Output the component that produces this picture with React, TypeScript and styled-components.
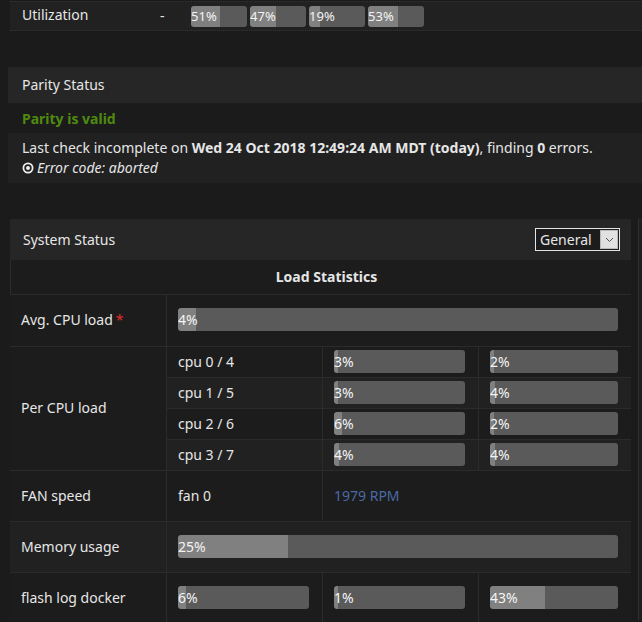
import { createGlobalStyle, styled } from 'styled-components';

const GlobalStyle = createGlobalStyle`
  html, body {
    margin: 0;
    padding: 0;
    background: #1b1b1b;
    color: #e6e6e6;
    font-family: "Noto Sans", "Liberation Sans", Arial, sans-serif;
    font-size: 14px;
    overflow: hidden;
  }
`;

type BarProps = { value: number; width?: number; height?: number; small?: boolean };

const Bar = ({ value, width, height = 23, small }: BarProps) => (
  <SBar $width={width} $height={height}>
    <SFill style={{ width: `${value}%` }} />
    <SBarText $small={small}>{value}%</SBarText>
  </SBar>
);

const cpus = [
  { name: 'cpu 0 / 4', a: 3, b: 2 },
  { name: 'cpu 1 / 5', a: 3, b: 4 },
  { name: 'cpu 2 / 6', a: 6, b: 2 },
  { name: 'cpu 3 / 7', a: 4, b: 4 },
];

const App = () => {
  return (
    <SPage>
      <GlobalStyle />
      <SUtilRow>
        <SUtilLabel>Utilization</SUtilLabel>
        <SUtilDash>-</SUtilDash>
        <SUtilBars>
          {[51, 47, 19, 53].map(v => (
            <Bar key={v} value={v} width={56} height={21} small />
          ))}
        </SUtilBars>
      </SUtilRow>

      <SParity>
        <SPanelHead>Parity Status</SPanelHead>
        <SValid>Parity is valid</SValid>
        <SCheck>
          <div>
            Last check incomplete on <b>Wed 24 Oct 2018 12:49:24 AM MDT (today)</b>, finding{' '}
            <b>0</b> errors.
          </div>
          <SErrorLine>
            <SDotIcon viewBox="0 0 12 12">
              <circle cx="6" cy="6" r="4.6" fill="none" stroke="#eee" strokeWidth="1.8" />
              <circle cx="6" cy="6" r="2" fill="#eee" />
            </SDotIcon>
            <i>Error code: aborted</i>
          </SErrorLine>
        </SCheck>
      </SParity>

      <SColumns>
        <SSystem>
          <SSystemHead>
            <span>System Status</span>
            <SSelect>
              <span>General</span>
              <SSelectArrow>
                <svg width="9" height="6" viewBox="0 0 9 6">
                  <path d="M1 1l3.5 3.5L8 1" fill="none" stroke="#555" strokeWidth="1" />
                </svg>
              </SSelectArrow>
            </SSelect>
          </SSystemHead>

          <STable>
            <STitleCell $span={4}>Load Statistics</STitleCell>

            <SCell $first>
              Avg. CPU load <SStar>*</SStar>
            </SCell>
            <SCell $span={3}>
              <Bar value={4} />
            </SCell>

            <SCell $first $rows={4}>
              Per CPU load
            </SCell>
            {cpus.map((c, i) => [
              <SCell key={c.name} $alt={i % 2 === 1}>
                {c.name}
              </SCell>,
              <SCell key={c.name + 'a'} $alt={i % 2 === 1}>
                <Bar value={c.a} />
              </SCell>,
              <SCell key={c.name + 'b'} $alt={i % 2 === 1}>
                <Bar value={c.b} />
              </SCell>,
            ])}

            <SCell $first>FAN speed</SCell>
            <SCell>fan 0</SCell>
            <SCell $span={2}>
              <SRpm>1979 RPM</SRpm>
            </SCell>

            <SCell $first $alt>
              Memory usage
            </SCell>
            <SCell $span={3} $alt>
              <Bar value={25} />
            </SCell>

            <SCell $first>flash log docker</SCell>
            <SCell>
              <Bar value={6} />
            </SCell>
            <SCell>
              <Bar value={1} />
            </SCell>
            <SCell>
              <Bar value={43} />
            </SCell>
          </STable>
        </SSystem>
        <SSidePanel />
      </SColumns>
    </SPage>
  );
};

const SPage = styled.div`
  width: 642px;
  height: 622px;
  overflow: hidden;
`;

const SUtilRow = styled.div`
  margin-left: 10px;
  height: 30px;
  display: flex;
  align-items: center;
  background: #212121;
  border-top: 1px dotted #333;
  border-bottom: 1px dotted #333;
  box-sizing: border-box;
  margin-top: 1px;
  line-height: 18px;
`;

const SUtilLabel = styled.span`
  width: 138px;
  padding-left: 12px;
  margin-top: -2px;
`;

const SUtilDash = styled.span`
  width: 31px;
`;

const SUtilBars = styled.div`
  display: flex;
  gap: 3px;
`;

const SParity = styled.section`
  margin: 36px 0 0 8px;
`;

const SPanelHead = styled.div`
  height: 36px;
  display: flex;
  align-items: center;
  padding: 0 0 2px 14px;
  box-sizing: border-box;
  background: #262626;
`;

const SValid = styled.div`
  height: 30px;
  display: flex;
  align-items: center;
  padding-left: 14px;
  color: #4f8a10;
  font-weight: bold;
`;

const SCheck = styled.div`
  background: #212121;
  padding: 5px 14px;
  line-height: 20px;
`;

const SErrorLine = styled.div`
  display: flex;
  align-items: center;
  gap: 3px;
`;

const SDotIcon = styled.svg`
  width: 12px;
  height: 12px;
`;

const SColumns = styled.div`
  display: flex;
  margin: 36px 0 0 10px;
  gap: 7px;
`;

const SSystem = styled.section`
  width: 621px;
  flex-shrink: 0;
  background: #1c1c1c;
`;

const SSidePanel = styled.section`
  flex: 1;
  background: #1f1f1f;
  border-left: 1px solid #2e2e2e;
  border-top: 1px solid #262626;
  height: 400px;
`;

const SSystemHead = styled.div`
  height: 41px;
  display: flex;
  align-items: center;
  justify-content: space-between;
  padding: 0 11px 0 13px;
  background: #262626;
`;

const SSelect = styled.div`
  width: 85px;
  height: 23px;
  display: flex;
  align-items: center;
  justify-content: space-between;
  border: 1px solid #e4e4e4;
  background: #1c1c1c;
  padding-left: 4px;
  box-sizing: border-box;
`;

const SSelectArrow = styled.span`
  width: 18px;
  height: 19px;
  margin-right: 1px;
  display: flex;
  align-items: center;
  justify-content: center;
  background: #e1e1e1;
  border: 1px solid #bbb;
  box-sizing: border-box;
`;

const STable = styled.div`
  display: grid;
  grid-template-columns: 156px 156px 156px 153px;
  grid-template-rows: 34px 52px 31px 31px 31px 31px 51px 51px 51px;
`;

const SCell = styled.div<{
  $span?: number;
  $rows?: number;
  $first?: boolean;
  $alt?: boolean;
}>`
  grid-column: span ${p => p.$span ?? 1};
  grid-row: span ${p => p.$rows ?? 1};
  display: flex;
  align-items: center;
  padding: 0 13px 2px 11px;
  border-top: 1px solid #2b2b2b;
  border-left: ${p => (p.$first ? 'none' : '1px solid #2b2b2b')};
  background: ${p => (p.$alt ? '#212121' : '#1c1c1c')};
  box-sizing: border-box;
  min-width: 0;
`;

const STitleCell = styled(SCell)`
  justify-content: center;
  padding-left: 24px;
  font-weight: bold;
  border-top: none;
`;

const SStar = styled.span`
  color: #e22b2b;
  margin-left: 3px;
`;

const SRpm = styled.span`
  color: #4a6aa5;
`;

const SBar = styled.div<{ $width?: number; $height: number }>`
  position: relative;
  width: ${p => (p.$width ? `${p.$width}px` : '100%')};
  height: ${p => p.$height}px;
  background: #5a5a5a;
  border-radius: 3px;
  overflow: hidden;
  flex-shrink: 0;
`;

const SFill = styled.div`
  height: 100%;
  min-width: 4px;
  background: #808080;
  border-radius: 3px 0 0 3px;
`;

const SBarText = styled.span<{ $small?: boolean }>`
  position: absolute;
  left: 0;
  top: 0;
  bottom: 0;
  display: flex;
  align-items: center;
  color: #f4f4f4;
  font-size: ${p => (p.$small ? '13px' : '14px')};
`;

export default App;
